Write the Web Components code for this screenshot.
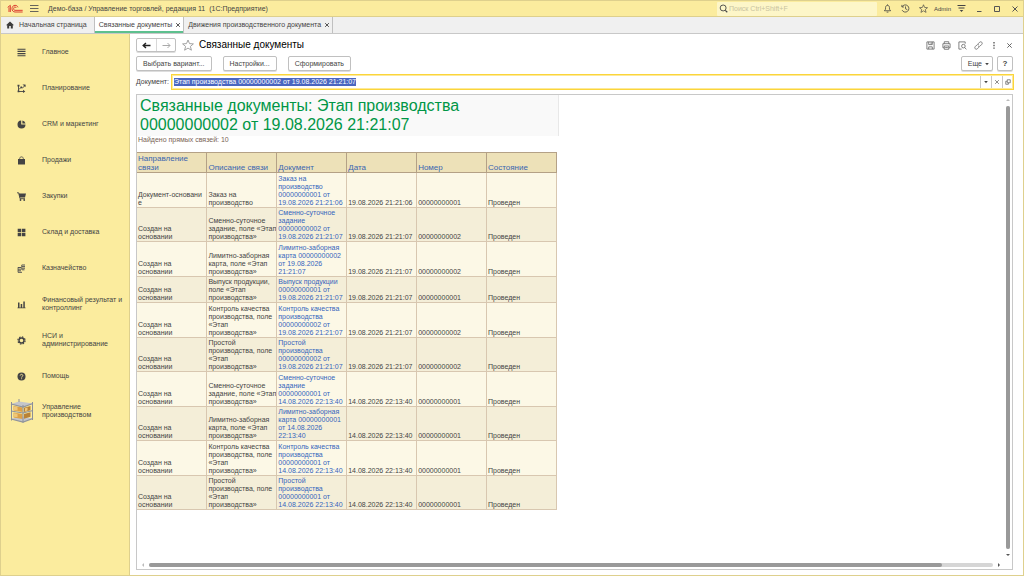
<!DOCTYPE html>
<html lang="ru">
<head>
<meta charset="UTF-8">
<meta name="viewport" content="width=device-width, initial-scale=1.0">
<title>Связанные документы</title>
<style>
html, body {
  margin: 0;
  height: 100%;
}
body {
  font: 7px/8px "Liberation Sans", Arial, sans-serif;
  color: #444;
  --yellow: #fbec9e;
  --frame: #ded08d;
}
</style>
</head>
<body>
<app-window>
  <title-bar slot="top" caption="Демо-база / Управление торговлей, редакция 11  (1С:Предприятие)" user="Admin"></title-bar>
  <tab-bar slot="top">
    <tab-item icon="home">Начальная страница</tab-item>
    <tab-item active closable>Связанные документы</tab-item>
    <tab-item closable>Движения производственного документа</tab-item>
  </tab-bar>
  <side-menu slot="side">
    <side-item icon="lines">Главное</side-item>
    <side-item icon="plan">Планирование</side-item>
    <side-item icon="pie">CRM и маркетинг</side-item>
    <side-item icon="bag">Продажи</side-item>
    <side-item icon="cart">Закупки</side-item>
    <side-item icon="grid">Склад и доставка</side-item>
    <side-item icon="coins">Казначейство</side-item>
    <side-item icon="bars">Финансовый результат и контроллинг</side-item>
    <side-item icon="gear">НСИ и<br>администрирование</side-item>
    <side-item icon="help">Помощь</side-item>
    <side-item icon="rack" large>Управление<br>производством</side-item>
  </side-menu>
  <form-header caption="Связанные документы"></form-header>
  <command-bar></command-bar>
  <document-field label="Документ:" value="Этап производства 00000000002 от 19.08.2026 21:21:07"></document-field>
  <scroll-box>
    <report-sheet></report-sheet>
  </scroll-box>
</app-window>

<script>
const ICONS = {
  logo: `<svg viewBox="0 0 48 28"><g fill="none" stroke="#dc3f32" stroke-width="3"><path d="M2 9l8-6v20M6 9v14"/><path d="M33 9c-1-4-5-6-9-6-5 0-9 4-9 10s4 10 9 10h23"/><path d="M28 11c-1-2-2-3-4-3-3 0-4 2-4 5s1 5 4 5h23"/></g></svg>`,
  burger: `<svg viewBox="0 0 9 9"><path d="M0 1.500h8.500M0 4.500h8.500M0 7.500h8.500" stroke="#555" stroke-width=".9"/></svg>`,
  search: `<svg viewBox="0 0 10 10" fill="none" stroke="#444"><circle cx="4.600" cy="4.400" r="3.300"/><path d="M7 7l2.200 2.200" stroke-width="1.300"/></svg>`,
  bell: `<svg viewBox="0 0 10 10" fill="none" stroke="#444" stroke-width=".9"><path d="M1.500 7.500h7L7.200 5.800V4C7.200 2.500 6.200 1.500 5 1.500S2.800 2.500 2.800 4v1.800zM5 .5v1"/><path d="M4 9h2"/></svg>`,
  history: `<svg viewBox="0 0 10 10" fill="none" stroke="#444" stroke-width=".9"><path d="M1.300 3A4 4 0 1 1 1.200 6.800M1 1v2.300h2.300M5 2.700V5.300l2 1"/></svg>`,
  star: `<svg viewBox="0 0 12 12" fill="none" stroke="currentColor" stroke-width=".9"><path d="M6 1l1.500 3.600 3.900.3-3 2.500 1 3.800L6 9.100l-3.400 2.100 1-3.800-3-2.500 3.900-.3z"/></svg>`,
  settings: `<svg viewBox="0 0 9 9"><path d="M.5 1.500h8M1.500 4h6" stroke="#444"/><path d="M2.700 6h3.600L4.500 8z" fill="#444"/></svg>`,
  min: `<svg viewBox="0 0 8 8"><path d="M2 6.500h4.500" stroke="#555"/></svg>`,
  max: `<svg viewBox="0 0 8 8"><path d="M1.500 1.500h5v5h-5z" fill="none" stroke="#555"/></svg>`,
  close: `<svg viewBox="0 0 8 8"><path d="M1.500 1.500l5 5M6.500 1.500l-5 5" stroke="currentColor"/></svg>`,
  home: `<svg viewBox="0 0 8 8"><path d="M4 .4L0 4.200h1.200V7.600h2V5h1.600v2.600h2V4.200H8z" fill="#3c3c3c"/></svg>`,
  left: `<svg viewBox="0 0 9 8"><path d="M1 4h7.500M4 1.500L1.200 4 4 6.500" fill="none" stroke="#222" stroke-width="1.400"/></svg>`,
  right: `<svg viewBox="0 0 9 8"><path d="M.5 4H8M5.500 1.500L8 4 5.500 6.500" fill="none" stroke="#aaa"/></svg>`,
  save: `<svg viewBox="0 0 10 10" fill="none" stroke="#666" stroke-width=".9"><path d="M1 1h8v8H1zM3 1v3h4V1M3 9V6.500h4V9"/><path d="M5.700 1.500v2"/></svg>`,
  print: `<svg viewBox="0 0 10 10" fill="none" stroke="#666" stroke-width=".9"><path d="M2.500 3V.8h5V3M2.500 7.500H1V3h8v4.500H7.500M2.500 5.500h5v3.700h-5zM3.500 7.300h3"/></svg>`,
  preview: `<svg viewBox="0 0 10 10" fill="none" stroke="#666" stroke-width=".9"><path d="M4 9H1V1h7v2"/><circle cx="6" cy="5.700" r="2"/><path d="M7.400 7.200L9.300 9.300"/></svg>`,
  link: `<svg viewBox="0 0 10 10" fill="none" stroke="#666" stroke-width=".9"><path d="M4.400 3.200l1.800-1.800c.7-.7 1.700-.7 2.400 0s.7 1.700 0 2.400L6.800 5.600c-.6.600-1.700.600-2.300 0M5.600 6.800L3.800 8.600c-.7.700-1.700.7-2.400 0s-.7-1.700 0-2.400l1.800-1.800c.6-.6 1.700-.6 2.300 0"/></svg>`,
  dots: `<svg viewBox="0 0 8 10" fill="#555"><path d="M2.700 1.200h1.500v1.500H2.700zM2.700 4.200h1.500v1.500H2.700zM2.700 7.200h1.500v1.500H2.700z"/></svg>`,
  down: `<svg viewBox="0 0 6 6"><path d="M1.200 2h3.600L3 4.200z" fill="#444"/></svg>`,
  open: `<svg viewBox="0 0 8 8" fill="none" stroke="#555" stroke-width=".9"><path d="M3 1h4v4H3zM3 3H1v4h3.500V5"/></svg>`,
  lines: `<svg viewBox="0 0 9 9"><path d="M.5 1.200h8M.5 3.400h8M.5 5.600h8M.5 7.800h8" stroke="#444" stroke-width="1.100"/></svg>`,
  plan: `<svg viewBox="0 0 9 9"><path d="M1.500 1.500v6h5M2 5.500l2-2.200 1.500.7L8 1.500" fill="none" stroke="#444" stroke-width=".9"/><path d="M.5.800h2v1.600h-2zM3.500 2.600h1.600v1.600H3.500zM5.500.500h3v2.800zM.6 6.500h1.800v1.800H.6zM6 5.800l2.300 1.700L6 9z" fill="#444"/></svg>`,
  pie: `<svg viewBox="0 0 9 9"><path d="M4.200.6v4h4.300A4 4 0 1 1 4.200.6z" fill="#444"/><path d="M5.400.5a4 4 0 0 1 3.100 3H5.400z" fill="#444"/></svg>`,
  bag: `<svg viewBox="0 0 9 9"><path d="M1 3h7v5.500H1z" fill="#444"/><path d="M2.700 4.500v-2c0-2.200 3.600-2.200 3.600 0v2" fill="none" stroke="#444" stroke-width=".8"/></svg>`,
  cart: `<svg viewBox="0 0 9 9"><path d="M1.700 1.400H9L8 5.600H2.700z" fill="#444"/><path d="M0 .8h1.700L3 6.700h5" fill="none" stroke="#444" stroke-width=".9"/><circle cx="3.500" cy="8" r=".9" fill="#444"/><circle cx="7.200" cy="8" r=".9" fill="#444"/></svg>`,
  grid: `<svg viewBox="0 0 9 9"><path d="M.7.800h3.500v3.400H.7zM4.900.800h3.500v3.400H4.900zM.7 4.900h3.500v3.400H.7zM4.900 4.900h3.500v3.400H4.900z" fill="#444"/></svg>`,
  coins: `<svg viewBox="0 0 9 9"><path d="M1 3.500h3M1 5.200h3M1 6.800h3M1 8.300h4M5 1h3M5 2.600h3M5 4.200h3M5 5.800h2.500" stroke="#555"/><path d="M4.600.8v5M1 3.300v5" stroke="#444" stroke-width=".7"/></svg>`,
  bars: `<svg viewBox="0 0 9 9"><path d="M1 2.500h1.500v5H1zM3.700 4h1.500v3.500H3.700zM6.300 1.500h1.500v6H6.300zM.5 7.500h8v.8h-8z" fill="#444"/></svg>`,
  gear: `<svg viewBox="0 0 9 9" fill="none" stroke="#444"><circle cx="4.500" cy="4.500" r="2.500" stroke-width="1.400"/><circle cx="4.500" cy="4.500" r="3.600" stroke-width="1.200" stroke-dasharray="1.500 1.327"/></svg>`,
  help: `<svg viewBox="0 0 9 9"><circle cx="4.500" cy="4.500" r="4" fill="#444"/><path d="M3.200 3.600c0-1.800 2.700-1.600 2.600 0 0 .9-1.200.9-1.200 2M4.600 6.300v.9" fill="none" stroke="#fbec9e" stroke-width=".9"/></svg>`,
  rack: `<svg viewBox="0 0 24 24">
    <path d="M1 5L9 2.500 23 4.500 13 8zM1 20l8-3 14 2.500L13 23z" fill="#c3c5ca"/>
    <path d="M3.500 7l9 1.500V13l-9-1.500zM3.500 13.500l9 1.500v5l-9-1.500z" fill="#dca046"/>
    <path d="M14 8.700L20.500 7v4.200L14 13zM14 15l6.500-1.700v4.400L14 19.700z" fill="#b98236"/>
    <path d="M4 7.600l3.500.6v3.400l-3.500-.6zM4 14.200l3.500.6v3.500l-3.500-.6zM15 9.300l2.500-.7v3l-2.500.7z" fill="#efc77a"/>
    <path d="M1 12l12 2 10-2.500M1 20l12 3 10-3.500M1 5l12 3 10-3.500" fill="none" stroke="#8f939b" stroke-width="1.200"/>
    <path d="M1.500 3v18.500M13 6v17.700M22.500 3v18M9 0v3" stroke="#8b8f98"/></svg>`
};

// Base element: opens the shadow root and fills it from css() and html()
class BaseElement extends HTMLElement {
  constructor() {
    super();
    this.attachShadow({ mode: 'open' });
  }
  connectedCallback() {
    this.shadowRoot.innerHTML = `<style>
      * { box-sizing: border-box; }
      button, input { font: inherit; color: inherit; margin: 0; padding: 0; border: 0; background: none; }
      button { display: flex; align-items: center; justify-content: center; }
      ${this.css()}
    </style>${this.html()}`;
    this.ready();
  }
  ready() {}
}

class AppIcon extends BaseElement {
  css() {
    return `
      :host { display: inline-flex; flex: none; width: 9px; height: 9px; }
      svg { display: block; width: 100%; height: 100%; }
    `;
  }
  html() {
    return ICONS[this.getAttribute('name')] || '';
  }
}
customElements.define('app-icon', AppIcon);

class AppWindow extends BaseElement {
  css() {
    return `
      :host { display: flex; flex-direction: column; height: 100vh; box-sizing: border-box; background: #fff; border: 1px solid var(--frame); overflow: hidden; }
      .body { flex: 1; display: flex; min-height: 0; }
      main { flex: 1; min-width: 0; display: flex; flex-direction: column; padding: 4px 9px 5px 6px; }
    `;
  }
  html() {
    return `
      <slot name="top"></slot>
      <div class="body">
        <slot name="side"></slot>
        <main><slot></slot></main>
      </div>`;
  }
}
customElements.define('app-window', AppWindow);

class TitleBar extends BaseElement {
  css() {
    return `
      :host { display: flex; align-items: center; height: 16px; flex: none; background: var(--yellow); border-bottom: 1px solid var(--frame); padding: 0 4px 0 6px; box-sizing: border-box; }
      .logo { width: 16px; height: 10px; }
      .burger { margin: 0 9px 0 7px; }
      .caption { flex: 1; white-space: pre; }
      .search { display: flex; align-items: center; width: 160px; height: 14px; background: #fdf6c8; border-radius: 1px; padding: 0 2px; gap: 1px; }
      .search input { flex: 1; min-width: 0; height: 12px; outline: none; }
      .search input::placeholder { color: #c9c3a0; opacity: 1; }
      .tools { display: flex; align-items: center; gap: 9px; margin-left: 6px; color: #444; }
      .user { display: flex; align-items: center; gap: 6px; margin: 0 9px 0 6px; font-size: 6px; }
      .win { display: flex; gap: 10px; color: #555; }
      .win app-icon { width: 8px; height: 8px; }
    `;
  }
  html() {
    return `
      <app-icon class="logo" name="logo"></app-icon>
      <button class="burger" aria-label="Меню"><app-icon name="burger"></app-icon></button>
      <span class="caption">${this.getAttribute('caption')}</span>
      <label class="search"><app-icon name="search"></app-icon><input type="text" aria-label="Поиск" placeholder="Поиск Ctrl+Shift+F"></label>
      <div class="tools">
        <button aria-label="Уведомления"><app-icon name="bell"></app-icon></button>
        <button aria-label="История"><app-icon name="history"></app-icon></button>
        <button aria-label="Избранное"><app-icon name="star"></app-icon></button>
      </div>
      <div class="user">
        <span>${this.getAttribute('user')}</span>
        <button aria-label="Настройки"><app-icon name="settings"></app-icon></button>
      </div>
      <div class="win">
        <button aria-label="Свернуть"><app-icon name="min"></app-icon></button>
        <button aria-label="Развернуть"><app-icon name="max"></app-icon></button>
        <button aria-label="Закрыть"><app-icon name="close"></app-icon></button>
      </div>`;
  }
}
customElements.define('title-bar', TitleBar);

class TabBar extends BaseElement {
  css() {
    return `:host { display: flex; flex: none; height: 17px; box-sizing: border-box; background: #f0f0f0; border-bottom: 1px solid #c8c8c8; }`;
  }
  html() {
    return `<slot></slot>`;
  }
}
customElements.define('tab-bar', TabBar);

class TabItem extends BaseElement {
  css() {
    return `
      :host { display: flex; align-items: center; gap: 3px; padding: 0 2px 0 4px; border-right: 1px solid #c0c0c0; }
      :host([icon]) { gap: 5px; padding: 0 7px 0 5px; }
      :host([active]) { background: #fff; box-shadow: inset 0 -2px #5dc08e; }
      app-icon { width: 8px; height: 8px; }
      .x app-icon { width: 6px; height: 6px; color: #222; }
    `;
  }
  html() {
    const icon = this.getAttribute('icon');
    return `
      ${icon ? `<app-icon name="${icon}"></app-icon>` : ''}
      <button><slot></slot></button>
      ${this.hasAttribute('closable') ? `<button class="x" aria-label="Закрыть"><app-icon name="close"></app-icon></button>` : ''}`;
  }
}
customElements.define('tab-item', TabItem);

class SideMenu extends BaseElement {
  css() {
    return `
      :host { display: block; flex: none; width: 129px; box-sizing: border-box; background: var(--yellow); border-right: 1px solid var(--frame); }
      nav { display: flex; flex-direction: column; }
    `;
  }
  html() {
    return `<nav><slot></slot></nav>`;
  }
}
customElements.define('side-menu', SideMenu);

class SideItem extends BaseElement {
  css() {
    return `
      :host { display: block; }
      :host([large]) { margin-top: -1px; }
      a { display: flex; align-items: center; height: 36px; color: inherit; text-decoration: none; }
      .pic { display: flex; justify-content: center; width: 41px; flex: none; }
      :host([large]) app-icon { width: 24px; height: 24px; }
    `;
  }
  html() {
    return `<a href="#"><span class="pic"><app-icon name="${this.getAttribute('icon')}"></app-icon></span><span><slot></slot></span></a>`;
  }
}
customElements.define('side-item', SideItem);

class FormHeader extends BaseElement {
  css() {
    return `
      :host { display: flex; align-items: center; height: 14px; flex: none; }
      .nav { display: flex; height: 14px; border: 1px solid #c0c0c0; border-radius: 2px; box-shadow: 0 1px #ddd; }
      .nav button { width: 19px; }
      .nav button + button { border-left: 1px solid #d8d8d8; }
      .fav { margin: 0 5px 0 6px; color: #999; }
      .fav app-icon { width: 12px; height: 12px; }
      h1 { flex: 1; margin: 0; font-size: 10px; line-height: 12px; font-weight: normal; color: #000; }
      .tools { display: flex; gap: 7px; color: #555; padding-right: 1px; }
      .tools .x app-icon { width: 7px; height: 9px; }
    `;
  }
  html() {
    return `
      <div class="nav">
        <button aria-label="Назад"><app-icon name="left"></app-icon></button>
        <button aria-label="Вперед"><app-icon name="right"></app-icon></button>
      </div>
      <button class="fav" aria-label="В избранное"><app-icon name="star"></app-icon></button>
      <h1>${this.getAttribute('caption')}</h1>
      <div class="tools">
        <button aria-label="Сохранить"><app-icon name="save"></app-icon></button>
        <button aria-label="Печать"><app-icon name="print"></app-icon></button>
        <button aria-label="Просмотр"><app-icon name="preview"></app-icon></button>
        <button aria-label="Ссылка"><app-icon name="link"></app-icon></button>
        <button aria-label="Действия"><app-icon name="dots"></app-icon></button>
        <button class="x" aria-label="Закрыть"><app-icon name="close"></app-icon></button>
      </div>`;
  }
}
customElements.define('form-header', FormHeader);

class CommandBar extends BaseElement {
  css() {
    return `
      :host { display: flex; flex: none; gap: 11px; margin-top: 4px; }
      button { height: 15px; padding: 0 6px; border: 1px solid #c0c0c0; border-radius: 2px; box-shadow: 0 1px #ddd; background: #fff; }
      .right { display: flex; gap: 4px; margin: 0 1px 0 auto; }
      .more { padding: 0 2px 0 6px; gap: 2px; }
      .more app-icon { width: 6px; height: 6px; }
      .help { padding: 0; width: 16px; font-weight: bold; font-size: 8px; }
    `;
  }
  html() {
    return `
      <button>Выбрать вариант...</button>
      <button>Настройки...</button>
      <button>Сформировать</button>
      <div class="right">
        <button class="more">Еще <app-icon name="down"></app-icon></button>
        <button class="help">?</button>
      </div>`;
  }
}
customElements.define('command-bar', CommandBar);

class DocumentField extends BaseElement {
  css() {
    return `
      :host { display: flex; align-items: center; flex: none; gap: 2px; margin-top: 3px; }
      .box { flex: 1; display: flex; height: 16px; border: 1px solid #fbd53a; outline: 1px solid #fde99a; outline-offset: -2px; background: #fff; }
      input { flex: 1; min-width: 0; padding-left: 2px; outline: none; }
      input::selection { background: #4a66c0; color: #fff; }
      .box button { width: 11px; height: 12px; margin: 1px 0; border-left: 1px solid #c8c8c8; }
      app-icon { width: 6px; height: 6px; color: #666; }
    `;
  }
  html() {
    return `
      <label for="doc">${this.getAttribute('label')}</label>
      <div class="box">
        <input id="doc" type="text" value="${this.getAttribute('value')}">
        <button aria-label="Выбрать"><app-icon name="down"></app-icon></button>
        <button aria-label="Очистить"><app-icon name="close"></app-icon></button>
        <button aria-label="Открыть"><app-icon name="open"></app-icon></button>
      </div>`;
  }
  ready() {
    const input = this.shadowRoot.querySelector('input');
    input.focus();
    input.select();
  }
}
customElements.define('document-field', DocumentField);

class ScrollBox extends BaseElement {
  css() {
    return `
      :host { flex: 1; min-height: 0; display: grid; grid-template: minmax(0, 1fr) 9px / minmax(0, 1fr) 8px; box-sizing: border-box; margin: 4px 1px 0 0; border: 1px solid #c8c8c8; }
      .view { overflow: hidden; }
      .bar { display: flex; align-items: center; justify-content: space-between; gap: 5px; }
      .v { flex-direction: column; padding: 4px 0; }
      .h { padding: 0 4px 0 5px; }
      .track { flex: 1; background: #d6d6d6; border-radius: 2px; }
      .thumb { background: #999; border-radius: 2px; }
      .v .track { width: 4px; }
      .v .thumb { height: 100%; }
      .h .track { height: 4px; }
      .h .thumb { width: 94%; height: 4px; }
      .arrow { border: 2px solid transparent; width: 0; height: 0; }
      .up { border-bottom-color: #bbb; border-top: 0; }
      .down { border-top-color: #555; border-bottom: 0; }
      .left { border-right-color: #bbb; border-left: 0; }
      .right { border-left-color: #555; border-right: 0; }
    `;
  }
  html() {
    return `
      <div class="view"><slot></slot></div>
      <div class="bar v"><i class="arrow up"></i><div class="track"><div class="thumb"></div></div><i class="arrow down"></i></div>
      <div class="bar h"><i class="arrow left"></i><div class="track"><div class="thumb"></div></div><i class="arrow right"></i></div>`;
  }
}
customElements.define('scroll-box', ScrollBox);

const BASED = 'Создан на\nосновании';
const ROWS = [
  ['Документ-основани\nе', 'Заказ на\nпроизводство', 'Заказ на\nпроизводство\n00000000001 от\n19.08.2026 21:21:06', '19.08.2026 21:21:06', '00000000001'],
  [BASED, 'Сменно-суточное\nзадание, поле «Этап\nпроизводства»', 'Сменно-суточное\nзадание\n00000000002 от\n19.08.2026 21:21:07', '19.08.2026 21:21:07', '00000000002'],
  [BASED, 'Лимитно-заборная\nкарта, поле «Этап\nпроизводства»', 'Лимитно-заборная\nкарта 00000000002\nот 19.08.2026\n21:21:07', '19.08.2026 21:21:07', '00000000002'],
  [BASED, 'Выпуск продукции,\nполе «Этап\nпроизводства»', 'Выпуск продукции\n00000000001 от\n19.08.2026 21:21:07', '19.08.2026 21:21:07', '00000000001'],
  [BASED, 'Контроль качества\nпроизводства, поле\n«Этап\nпроизводства»', 'Контроль качества\nпроизводства\n00000000002 от\n19.08.2026 21:21:07', '19.08.2026 21:21:07', '00000000002'],
  [BASED, 'Простой\nпроизводства, поле\n«Этап\nпроизводства»', 'Простой\nпроизводства\n00000000002 от\n19.08.2026 21:21:07', '19.08.2026 21:21:07', '00000000002'],
  [BASED, 'Сменно-суточное\nзадание, поле «Этап\nпроизводства»', 'Сменно-суточное\nзадание\n00000000001 от\n14.08.2026 22:13:40', '14.08.2026 22:13:40', '00000000001'],
  [BASED, 'Лимитно-заборная\nкарта, поле «Этап\nпроизводства»', 'Лимитно-заборная\nкарта 00000000001\nот 14.08.2026\n22:13:40', '14.08.2026 22:13:40', '00000000001'],
  [BASED, 'Контроль качества\nпроизводства, поле\n«Этап\nпроизводства»', 'Контроль качества\nпроизводства\n00000000001 от\n14.08.2026 22:13:40', '14.08.2026 22:13:40', '00000000001'],
  [BASED, 'Простой\nпроизводства, поле\n«Этап\nпроизводства»', 'Простой\nпроизводства\n00000000001 от\n14.08.2026 22:13:40', '14.08.2026 22:13:40', '00000000001']
];

class ReportSheet extends BaseElement {
  css() {
    return `
      :host { display: block; width: 422px; }
      h2 { margin: 0; padding: 1px 3px 2px; font-size: 16px; line-height: 19px; font-weight: normal; color: #009646; background: #f9f9f9; border-right: 1px solid #e8e8e8; }
      p { margin: 0 0 8px; padding: 0 1px; color: #7a6455; }
      table { width: 420px; table-layout: fixed; border-collapse: collapse; }
      th, td { vertical-align: bottom; text-align: left; padding: 2px 1px 0; white-space: pre; border: 1px solid #d8c7b0; overflow: hidden; }
      tr:nth-child(even) td { padding-top: 1px; background: #f4eed8; }
      th { height: 20px; padding: 1px 1px 0; font-size: 8px; line-height: 9px; font-weight: normal; color: #3a65b0; }
      tr th { background: #ede1b8; border-color: #b4a186; }
      td { background: #fcf8e6; }
      td:first-child, th:first-child { border-left: 0; }
      a { color: #3565bd; text-decoration: none; }
    `;
  }
  html() {
    const heads = ['Направление\nсвязи', 'Описание связи', 'Документ', 'Дата', 'Номер', 'Состояние'];
    return `
      <h2>Связанные документы: Этап производства<br>00000000002 от 19.08.2026 21:21:07</h2>
      <p>Найдено прямых связей: 10</p>
      <table>
        <thead><tr>${heads.map(h => `<th>${h}</th>`).join('')}</tr></thead>
        <tbody>${ROWS.map(([dir, text, doc, date, num]) => `<tr><td>${dir}</td><td>${text}</td><td><a href="#">${doc}</a></td><td>${date}</td><td>${num}</td><td>Проведен</td></tr>`).join('')}</tbody>
      </table>`;
  }
}
customElements.define('report-sheet', ReportSheet);
</script>
</body>
</html>
